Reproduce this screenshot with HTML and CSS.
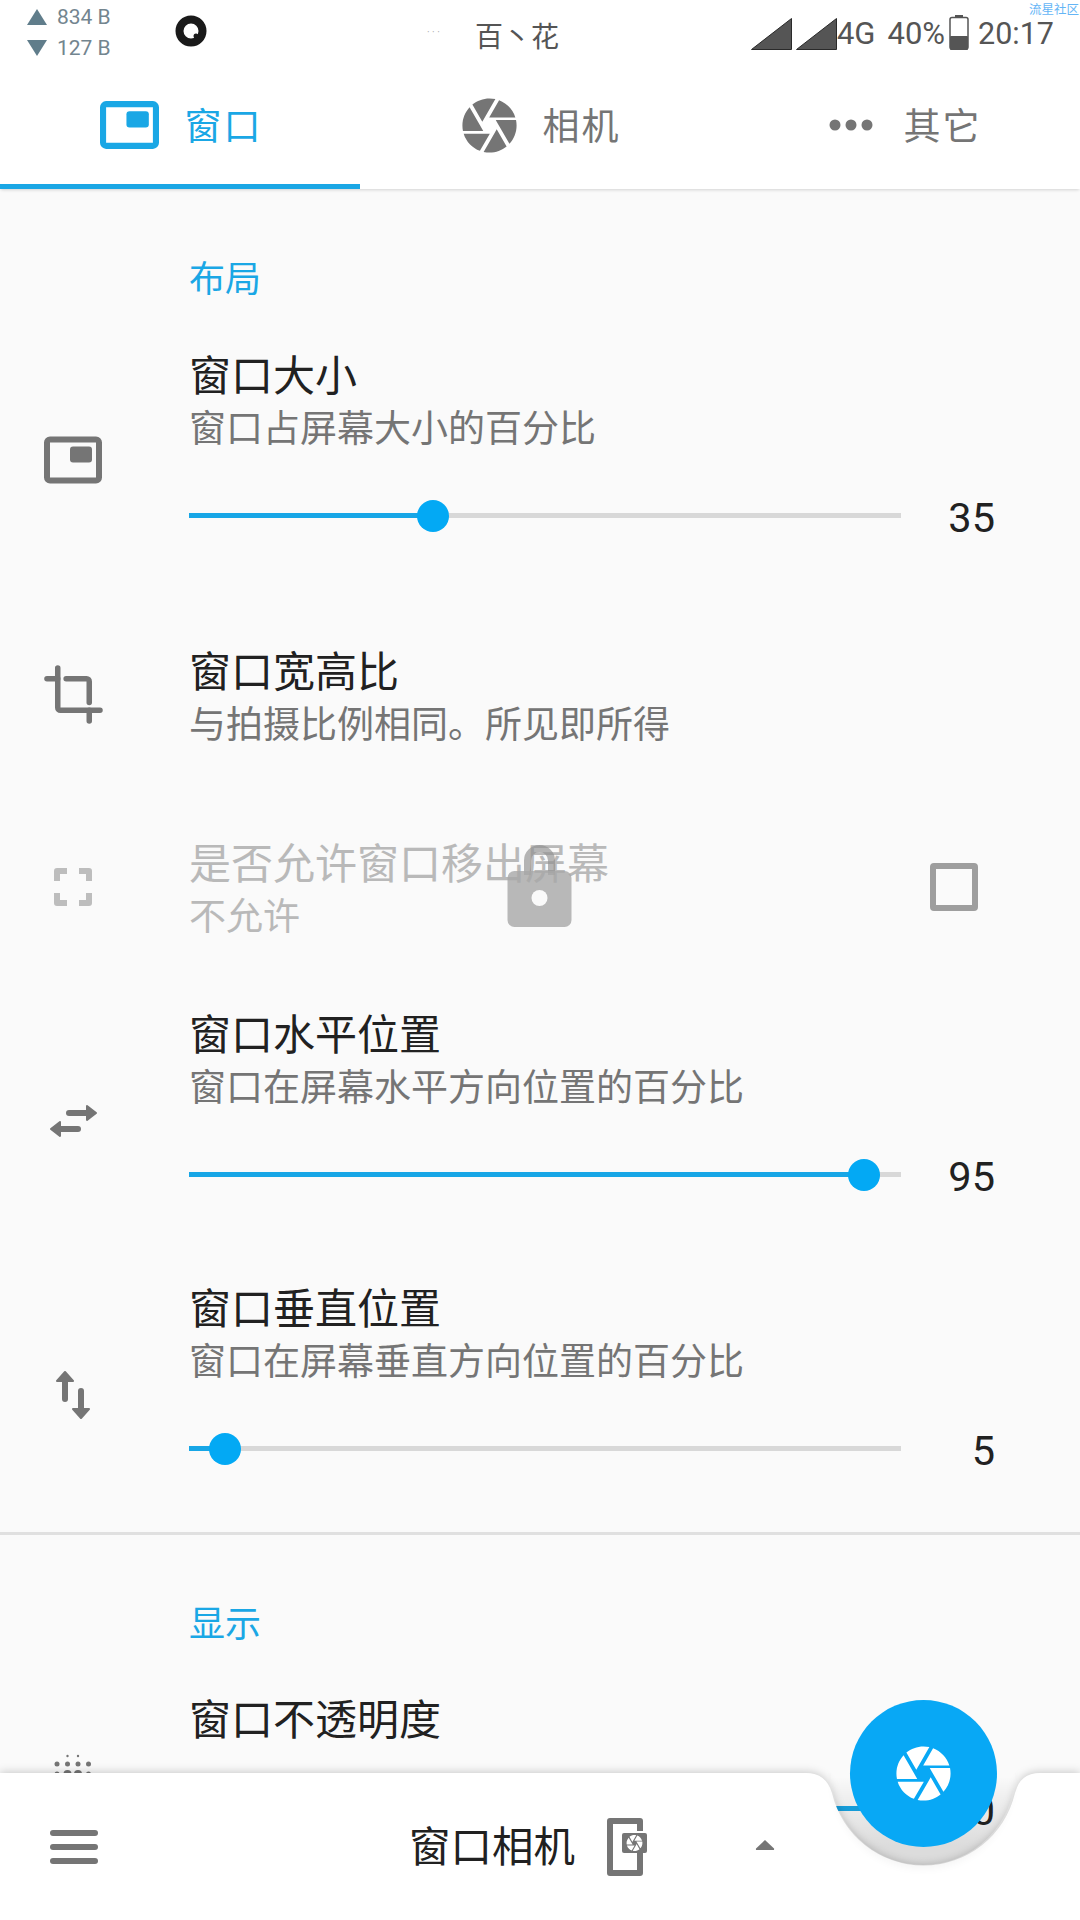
FILE: index.html
```html
<!DOCTYPE html>
<html lang="zh-CN">
<head>
  <meta charset="UTF-8" />
  <meta name="viewport" content="width=device-width, initial-scale=1.0"/>
  <title>窗口相机</title>
  <link rel="stylesheet" href="styles.css">
</head>
<body>
  <svg class="defs" width="0" height="0">
    <symbol id="shutter" viewBox="0 0 24 24">
      <path d="M9.4 10.5l4.77-8.26C13.47 2.09 12.75 2 12 2c-2.4 0-4.6.85-6.32 2.25l3.66 6.35.06-.1zM21.54 9c-.92-2.92-3.15-5.26-6-6.34L11.88 9h9.66zm.26 1h-7.49l.29.5 4.76 8.25C21 16.97 22 14.61 22 12c0-.69-.07-1.35-.2-2zM8.54 12l-3.9-6.75C3.01 7.03 2 9.39 2 12c0 .69.07 1.35.2 2h7.49l-1.15-2zm-6.08 3c.92 2.92 3.15 5.26 6 6.34L12.12 15H2.46zm11.27 0l-3.9 6.76c.7.15 1.42.24 2.17.24 2.4 0 4.6-.85 6.32-2.25l-3.66-6.35-.93 1.6z"/>
    </symbol>
    <symbol id="window" viewBox="0 0 58 47">
      <rect x="3" y="3" width="52" height="41" rx="3" fill="none" stroke="currentColor" stroke-width="6"/>
      <rect x="26" y="10" width="22" height="16" rx="3" fill="currentColor"/>
    </symbol>
  </svg>

  <div class="page">
    <div class="status">
      <div class="net">
        <div class="net-line"><svg width="20" height="16"><polygon points="10,0 20,16 0,16"/></svg>834 B</div>
        <div class="net-line"><svg width="20" height="16"><polygon points="0,0 20,0 10,16"/></svg>127 B</div>
      </div>
      <svg class="ring" width="32" height="32" viewBox="0 0 32 32">
        <circle cx="16" cy="16" r="11.5" fill="none" stroke="#1a1a1a" stroke-width="8"/>
        <circle cx="21" cy="21" r="2.5" fill="#1a1a1a"/>
      </svg>
      <span class="dots">· · ·</span>
      <span class="carrier">百丶花</span>
      <div class="status-right">
        <svg class="signal" width="41" height="32" viewBox="0 0 41 32"><polygon points="0.5,31.5 40.5,0.5 40.5,31.5"/></svg>
        <svg class="signal" width="41" height="32" viewBox="0 0 41 32"><polygon points="0.5,31.5 40.5,0.5 40.5,31.5"/></svg>
        <span class="net-type">4G</span>
        <span class="battery-text">40%</span>
        <svg class="battery" width="20" height="35" viewBox="0 0 20 35">
          <rect x="6" y="0" width="8" height="3" fill="#555"/>
          <rect x="1" y="2.5" width="18" height="31.5" rx="2" fill="none" stroke="#555" stroke-width="1.5"/>
          <rect x="1" y="21" width="18" height="14" rx="1" fill="#555"/>
        </svg>
        <span class="clock">20:17</span>
      </div>
      <span class="watermark">流星社区</span>
    </div>

    <div class="tabs">
      <div class="tab active">
        <svg class="tab-window"><use href="#window"/></svg>
        <span>窗口</span>
      </div>
      <div class="tab">
        <svg class="tab-shutter" viewBox="0 0 24 24"><use href="#shutter"/></svg>
        <span>相机</span>
      </div>
      <div class="tab">
        <svg class="tab-more" viewBox="0 0 44 12"><circle cx="6" cy="6" r="5.5"/><circle cx="22" cy="6" r="5.5"/><circle cx="38" cy="6" r="5.5"/></svg>
        <span>其它</span>
      </div>
    </div>

    <div class="section-label">布局</div>

    <div class="row row-gap">
      <div class="row-icon"><svg class="icon-window"><use href="#window"/></svg></div>
      <div class="row-body">
        <div class="title">窗口大小</div>
        <div class="sub">窗口占屏幕大小的百分比</div>
        <div class="slider">
          <div class="track"><div class="fill" style="width:34.3%"></div></div>
          <span class="value">35</span>
        </div>
      </div>
    </div>

    <div class="row short row-gap-wide">
      <div class="row-icon">
        <svg class="icon-crop" viewBox="0 0 24 24" fill="none" stroke="#757575" stroke-width="2.1" stroke-linecap="round">
          <path d="M6 1.9V17a1 1 0 0 0 1 1H22.1"/>
          <path d="M1.9 6H6"/>
          <path d="M9.2 6H17a1 1 0 0 1 1 1v8"/>
          <path d="M18 18v4.1"/>
        </svg>
      </div>
      <div class="row-body">
        <div class="title">窗口宽高比</div>
        <div class="sub">与拍摄比例相同。所见即所得</div>
      </div>
    </div>

    <div class="row short row-gap disabled">
      <div class="row-icon">
        <svg class="icon-full" viewBox="0 0 38 38" fill="none" stroke="#bdbdbd" stroke-width="6" stroke-linejoin="round">
          <path d="M3 13V3H13"/>
          <path d="M25 3H35V13"/>
          <path d="M35 25V35H25"/>
          <path d="M13 35H3V25"/>
        </svg>
      </div>
      <div class="row-body">
        <div class="title">是否允许窗口移出屏幕</div>
        <div class="sub">不允许</div>
      </div>
      <div class="checkbox"></div>
      <svg class="lock" viewBox="0 0 64 82">
        <path d="M20 30V15.5a12 12 0 0 1 24 0V30" fill="none" stroke="#8f8f8f" stroke-opacity="0.65" stroke-width="7"/>
        <rect x="0" y="26" width="64" height="56" rx="7" fill="#a8a8a8" fill-opacity="0.8"/>
        <circle cx="32" cy="53" r="8" fill="#fafafa"/>
      </svg>
    </div>

    <div class="row">
      <div class="row-icon">
        <svg class="icon-swap-h" viewBox="0 0 47 34" fill="#757575" stroke="#757575" stroke-linejoin="round" stroke-linecap="round">
          <path d="M19 9H36" fill="none" stroke-width="6"/>
          <polygon points="37,2 46,9 37,16" stroke-width="2"/>
          <path d="M28 25H11" fill="none" stroke-width="6"/>
          <polygon points="10,18 1,25 10,32" stroke-width="2"/>
        </svg>
      </div>
      <div class="row-body">
        <div class="title">窗口水平位置</div>
        <div class="sub">窗口在屏幕水平方向位置的百分比</div>
        <div class="slider">
          <div class="track"><div class="fill" style="width:94.8%"></div></div>
          <span class="value">95</span>
        </div>
      </div>
    </div>

    <div class="row">
      <div class="row-icon">
        <svg class="icon-swap-v" viewBox="0 0 34 48" fill="#757575" stroke="#757575" stroke-linejoin="round" stroke-linecap="round">
          <path d="M9 11V28" fill="none" stroke-width="6"/>
          <polygon points="9,1 17,10 1,10" stroke-width="2"/>
          <path d="M25 20V37" fill="none" stroke-width="6"/>
          <polygon points="25,47 33,38 17,38" stroke-width="2"/>
        </svg>
      </div>
      <div class="row-body">
        <div class="title">窗口垂直位置</div>
        <div class="sub">窗口在屏幕垂直方向位置的百分比</div>
        <div class="slider">
          <div class="track"><div class="fill" style="width:5%"></div></div>
          <span class="value">5</span>
        </div>
      </div>
    </div>

    <div class="divider"></div>

    <div class="section-label second">显示</div>

    <div class="row no-sub">
      <div class="row-icon">
        <svg class="icon-dots" viewBox="0 0 48 48" fill="#757575">
          <circle cx="18.5" cy="2" r="1.2"/><circle cx="29" cy="2" r="1.2"/>
          <circle cx="8" cy="10" r="2.5"/><circle cx="18.5" cy="10" r="2.5"/><circle cx="29" cy="10" r="2.5"/><circle cx="39.5" cy="10" r="2.5"/>
          <circle cx="8" cy="20" r="2.5"/><circle cx="18.5" cy="20" r="4"/><circle cx="29" cy="20" r="4"/><circle cx="39.5" cy="20" r="2.5"/>
          <circle cx="8" cy="30" r="2.5"/><circle cx="18.5" cy="30" r="4"/><circle cx="29" cy="30" r="4"/><circle cx="39.5" cy="30" r="2.5"/>
        </svg>
      </div>
      <div class="row-body">
        <div class="title">窗口不透明度</div>
        <div class="slider">
          <div class="track"><div class="fill" style="width:100%"></div></div>
          <span class="value">50</span>
        </div>
      </div>
    </div>

    <div class="bottom-bar">
      <svg class="bar-shape" viewBox="0 0 1080 160" width="1080" height="160">
        <path d="M0 13H806Q826 13 832 33A94 94 0 0 0 1015 33Q1020 13 1040 13H1080V160H0Z" fill="#fff"/>
      </svg>
      <div class="bar-content">
        <div class="menu"><i></i><i></i><i></i></div>
        <span class="app-name">窗口相机</span>
        <svg class="phone" viewBox="0 0 40 58">
          <path d="M33 13V3H3V55H33V34" fill="none" stroke="#757575" stroke-width="6" stroke-linejoin="round"/>
          <rect x="15" y="15" width="25" height="20" rx="2" fill="#757575"/>
          <use href="#shutter" x="18" y="15.5" width="19" height="19" fill="#fff"/>
        </svg>
        <svg class="caret" viewBox="0 0 20 12"><path d="M10 1L19 9.5Q19.5 11 18 11H2Q0.5 11 1 9.5Z"/></svg>
      </div>
    </div>

    <div class="notch-shade"></div>
    <div class="fab">
      <svg viewBox="0 0 24 24"><use href="#shutter"/></svg>
    </div>
  </div>
</body>
</html>
```

FILE: styles.css
```css
* {
  box-sizing: border-box;
}

html, body {
  margin: 0;
  padding: 0;
}

body {
  font-family: "Noto Sans CJK SC", Roboto, sans-serif;
  background-color: #fafafa;
  color: #212121;
}

.defs {
  position: absolute;
}

.page {
  position: relative;
  width: 1080px;
  height: 1920px;
  overflow: hidden;
  background-color: #fafafa;
}

/* status bar */
.status {
  position: relative;
  display: flex;
  align-items: center;
  height: 65px;
  padding-left: 27px;
  background-color: #fff;
  font-family: Roboto, "Noto Sans CJK SC", sans-serif;
}

.net {
  width: 148px;
}

.net-line {
  display: flex;
  align-items: center;
  gap: 10px;
  height: 31px;
  font-size: 21px;
  color: #73858f;
}

.net-line svg {
  fill: #607d8b;
}

.ring {
  flex: none;
  margin-top: -3px;
}

.dots {
  width: 48px;
  margin-left: 220px;
  font-size: 10px;
  color: #aaa;
}

.carrier {
  font-family: "Noto Sans CJK SC", sans-serif;
  font-size: 28px;
  color: #555;
  margin-top: 4px;
}

.status-right {
  display: flex;
  align-items: center;
  margin-left: auto;
  padding-right: 26px;
  padding-top: 2px;
  color: #555;
}

.signal {
  margin-left: 4px;
  fill: #555;
  stroke: #2a2a2a;
  stroke-width: 1;
}

.net-type {
  font-size: 31px;
  margin-right: 12px;
}

.battery-text {
  font-size: 31px;
}

.battery {
  margin: -2px 9px 0 4px;
}

.clock {
  font-size: 30.5px;
}

.watermark {
  position: absolute;
  top: 1px;
  right: 1px;
  font-family: "Noto Sans CJK SC", sans-serif;
  font-size: 12.5px;
  line-height: 15px;
  color: #64b5f6;
}

/* tabs */
.tabs {
  position: relative;
  display: flex;
  height: 124px;
  background-color: #fff;
  box-shadow: 0 2px 3px -1px rgba(0, 0, 0, 0.16);
}

.tab {
  flex: 1;
  display: flex;
  align-items: center;
  justify-content: center;
  gap: 26px;
  height: 124px;
  padding-bottom: 6px;
  font-size: 37px;
  color: #757575;
}

.tab span {
  letter-spacing: 2px;
  margin-right: -2px;
}

.tab.active {
  color: #1aa7e5;
  border-bottom: 5px solid #1aa7e5;
  padding-bottom: 2px;
}

.tab-window {
  width: 59px;
  height: 48px;
  margin-top: 2px;
}

.tab-shutter {
  width: 65px;
  height: 65px;
  margin: 3px -5px 0;
  fill: #757575;
}

.tab-more {
  width: 44px;
  height: 12px;
  margin: 2px 5px 0 8px;
  fill: #757575;
}

/* settings list */
.section-label {
  height: 48px;
  margin: 63px 0 23px;
  padding-left: 189px;
  font-size: 36px;
  line-height: 48px;
  color: #1aa7e5;
}

.section-label.second {
  margin-top: 62px;
  margin-bottom: 22px;
}

.divider {
  height: 3px;
  margin-top: 2px;
  background-color: #e0e0e0;
}

.row {
  position: relative;
  display: flex;
  height: 274px;
  padding: 22px 0 0;
}

.row.short {
  height: 151px;
}

.row.no-sub {
  height: 221px;
}

.row-gap {
  margin-bottom: 22px;
}

.row-gap-wide {
  margin-bottom: 41px;
}

.row.short.row-gap {
  margin-bottom: 20px;
}

.row-icon {
  position: absolute;
  top: 0;
  bottom: 0;
  left: 0;
  width: 146px;
  display: flex;
  align-items: center;
  justify-content: center;
}

.row-body {
  flex: 1;
  margin-left: 189px;
  padding-right: 85px;
}

.title {
  height: 55px;
  font-size: 42px;
  line-height: 55px;
  color: #212121;
}

.sub {
  height: 53px;
  font-size: 37px;
  line-height: 53px;
  color: #757575;
}

.disabled .title,
.disabled .sub {
  color: #b9b9b9;
}

.slider {
  display: flex;
  align-items: center;
  height: 40px;
  margin-top: 42px;
}

.no-sub .slider {
  margin-top: 44px;
}

.track {
  flex: none;
  width: 712px;
  height: 5px;
  background-color: #d8d8d8;
}

.fill {
  position: relative;
  height: 5px;
  background-color: #17a6e6;
}

.fill::after {
  content: "";
  position: absolute;
  right: -16px;
  top: -13px;
  width: 32px;
  height: 32px;
  border-radius: 50%;
  background-color: #03a9f4;
}

.value {
  flex: 1;
  text-align: right;
  font-family: Roboto, sans-serif;
  font-size: 41.5px;
  color: #212121;
  padding-top: 4px;
}

.checkbox {
  flex: none;
  width: 48px;
  height: 48px;
  margin: 30px 102px 0 0;
  border: 6px solid #9e9e9e;
  border-radius: 4px;
}

.lock {
  position: absolute;
  left: 507px;
  top: 34px;
  width: 65px;
  height: 82px;
}

.icon-window {
  width: 58px;
  height: 48px;
  color: #757575;
}

.icon-crop {
  width: 63px;
  height: 63px;
}

.icon-full {
  width: 38px;
  height: 38px;
}

.icon-swap-h {
  width: 47px;
  height: 34px;
  margin-top: 3px;
}

.icon-swap-v {
  width: 34px;
  height: 48px;
  margin-top: 3px;
}

.icon-dots {
  width: 48px;
  height: 48px;
}

/* bottom bar */
.bottom-bar {
  position: absolute;
  left: 0;
  right: 0;
  bottom: 0;
  height: 147px;
}

.bar-shape {
  position: absolute;
  left: 0;
  bottom: 0;
  filter: drop-shadow(0 -1px 4px rgba(0, 0, 0, 0.2));
}

.bar-content {
  position: relative;
  display: flex;
  align-items: center;
  height: 147px;
  padding-left: 50px;
}

.menu {
  display: flex;
  flex-direction: column;
  gap: 8px;
  width: 48px;
}

.menu i {
  display: block;
  height: 6px;
  border-radius: 3px;
  background-color: #757575;
}

.app-name {
  margin-left: 311px;
  margin-bottom: 6px;
  font-size: 41.5px;
  color: #212121;
}

.phone {
  width: 40px;
  height: 58px;
  margin-left: 32px;
}

.caret {
  width: 20px;
  height: 12px;
  margin-left: 108px;
  margin-bottom: 4px;
  fill: #757575;
}

.notch-shade {
  position: absolute;
  left: 831px;
  top: 1681px;
  width: 184px;
  height: 184px;
  border-radius: 50%;
  background: linear-gradient(to bottom, rgba(0, 0, 0, 0) 52%, rgba(0, 0, 0, 0.04) 62%, rgba(0, 0, 0, 0.12) 90%);
  box-shadow: 0 6px 10px -3px rgba(0, 0, 0, 0.05);
  clip-path: inset(50% -30px -30px -30px);
}

.fab {
  position: absolute;
  left: 850px;
  top: 1700px;
  width: 147px;
  height: 147px;
  display: flex;
  align-items: center;
  justify-content: center;
  border-radius: 50%;
  background-color: #08a8f5;
}

.fab svg {
  width: 65px;
  height: 65px;
  fill: #fff;
}
```
